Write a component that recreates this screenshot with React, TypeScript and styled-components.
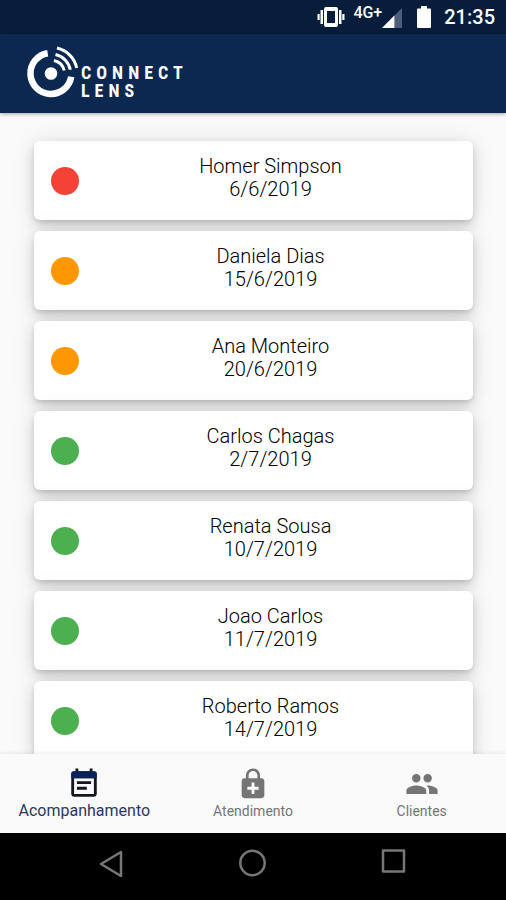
import React from "react";
import styled, { createGlobalStyle } from "styled-components";
import { MdEnhancedEncryption, MdPeople } from "react-icons/md";

const Global = createGlobalStyle`
  * { box-sizing: border-box; }
  html, body, #root { height: 100%; }
  body { margin: 0; background: #000; font-family: Roboto, "Liberation Sans", sans-serif; }
`;

const Screen = styled.div`
  display: flex;
  flex-direction: column;
  height: 100vh;
  overflow: hidden;
  background: #fafafa;
`;

const StatusBar = styled.div`
  display: flex;
  flex: none;
  align-items: center;
  justify-content: flex-end;
  height: 34px;
  padding-right: 11px;
  background: #071d3b;
  color: #fff;

  svg { flex: none; }
`;

const Signal = styled.div`
  display: flex;
  align-items: flex-end;
  height: 22px;
  margin: 0 15px 0 8px;
`;

const Network = styled.span`
  align-self: flex-start;
  font-size: 16px;
  line-height: 14px;
  font-weight: 500;
`;

const Clock = styled.time`
  margin-left: 13px;
  font-size: 20px;
  line-height: 24px;
  font-weight: 500;
`;

const AppBar = styled.header`
  position: relative;
  z-index: 1;
  display: flex;
  flex: none;
  align-items: center;
  height: 79px;
  padding: 0 0 4px 26px;
  background: #0a2850;
  box-shadow: 0 1px 4px rgba(0, 0, 0, 0.35);
`;

const Brand = styled.h1`
  align-self: flex-end;
  margin: 0 0 9px;
  color: #fff;
  font-family: "Roboto Condensed", "Open Sans Condensed", "Noto Sans Condensed", "Liberation Sans", sans-serif;
  font-size: 18px;
  line-height: 18px;
  font-weight: 700;
  letter-spacing: 5px;
`;

const BrandLine = styled.span`
  display: block;
`;

const List = styled.ul`
  display: flex;
  flex: 1;
  flex-direction: column;
  gap: 11px;
  min-height: 0;
  margin: 0;
  padding: 28px 33px 0 34px;
  overflow: hidden;
  list-style: none;
`;

const Card = styled.li`
  display: flex;
  flex: none;
  align-items: center;
  height: 79px;
  padding: 0 17px;
  border-radius: 6px;
  background: #fff;
  box-shadow: 0 3px 5px -1px rgba(0, 0, 0, 0.14), 0 6px 14px rgba(0, 0, 0, 0.12),
    0 1px 24px rgba(0, 0, 0, 0.1);
`;

const Dot = styled.span<{ $color: string }>`
  flex: none;
  width: 28px;
  height: 28px;
  border-radius: 50%;
  background: ${(p) => p.$color};
`;

const Details = styled.div`
  flex: 1;
  padding: 0 0 5px 6px;
  color: #000;
  font-size: 20px;
  line-height: 23px;
  font-weight: 300;
  text-align: center;
`;

const Name = styled.div``;
const Day = styled.time`
  display: block;
`;

const Tabs = styled.nav`
  position: relative;
  z-index: 1;
  display: flex;
  flex: none;
  height: 79px;
  background: #fafafa;
  box-shadow: 0 -1px 4px rgba(0, 0, 0, 0.08);
`;

const Tab = styled.button<{ $active?: boolean }>`
  display: flex;
  flex: 1 1 0;
  flex-direction: column;
  align-items: center;
  gap: 1px;
  min-width: 0;
  padding: 13px 0 0;
  border: 0;
  background: none;
  color: ${(p) => (p.$active ? "#2b3860" : "#757575")};
  font-family: inherit;
  font-size: ${(p) => (p.$active ? 16 : 14)}px;
  line-height: 18px;
  cursor: pointer;

  svg { display: block; flex: none; }
`;

const SystemBar = styled.div`
  display: flex;
  flex: none;
  align-items: center;
  justify-content: space-around;
  height: 67px;
  padding: 0 42px 7px;
  background: #000;
`;

const SystemButton = styled.button`
  padding: 0;
  border: 0;
  background: none;
  color: #777;

  svg { display: block; }
`;

const VibrateIcon = () => (
  <svg width="28" height="22" viewBox="0 0 28 22" fill="#fff" aria-hidden="true">
    <path fillRule="evenodd" d="M9 1h10a2 2 0 0 1 2 2v16a2 2 0 0 1-2 2H9a2 2 0 0 1-2-2V3a2 2 0 0 1 2-2zm1 4v12h8V5z" />
    <path d="M3.500 4H6v14H3.500zM0.500 8H2.700v6H0.500zM22 4h2.500v14H22zM25.300 8h2.200v6h-2.200z" />
  </svg>
);

const SignalIcon = () => (
  <svg width="20" height="20" viewBox="0 0 21 21" aria-hidden="true">
    <path d="M0 21 21 0v21z" fill="#4d5f78" />
    <path d="M0 21 13 8v13z" fill="#fff" />
  </svg>
);

const BatteryIcon = () => (
  <svg width="14" height="22" viewBox="0 0 14 22" fill="#fff" aria-hidden="true">
    <path d="M4 0h6v2.500h3a1 1 0 0 1 1 1V21a1 1 0 0 1-1 1H1a1 1 0 0 1-1-1V3.500a1 1 0 0 1 1-1h3z" />
  </svg>
);

const LensLogo = () => (
  <svg width="55" height="56" viewBox="26 44 55 56" fill="none" stroke="#fff" aria-hidden="true">
    <circle cx="51" cy="73.500" r="6.300" fill="#fff" stroke="none" />
    <path d="M47.700 53.200A20.500 20.500 0 1 0 71.200 76.700" strokeWidth="6.500" />
    <path d="M54 60.500A13.500 13.500 0 0 1 64.200 70.500" strokeWidth="3" />
    <path d="M55.500 54.500A19.500 19.500 0 0 1 70.300 69.800" strokeWidth="3" />
    <path d="M57 48A26 26 0 0 1 76.700 68" strokeWidth="3" />
  </svg>
);

const CalendarIcon = () => (
  <svg width="34" height="34" viewBox="0 0 24 24" aria-hidden="true">
    <path fill="#15171f" d="M17 10H7v2h10v-2zm2-7h-1V1h-2v2H8V1H6v2H5c-1.110 0-1.990.9-1.990 2L3 19c0 1.100.89 2 2 2h14c1.100 0 2-.9 2-2V5c0-1.100-.9-2-2-2zm0 16H5V8h14v11zm-5-5H7v2h7v-2z" />
    <path fill="#0b2255" d="M5 3h14a2 2 0 0 1 2 2v3H3V5a2 2 0 0 1 2-2z" />
  </svg>
);

const RED = "#f44336";
const ORANGE = "#ff9800";
const GREEN = "#4caf50";

const visits = [
  { name: "Homer Simpson", date: "6/6/2019", color: RED },
  { name: "Daniela Dias", date: "15/6/2019", color: ORANGE },
  { name: "Ana Monteiro", date: "20/6/2019", color: ORANGE },
  { name: "Carlos Chagas", date: "2/7/2019", color: GREEN },
  { name: "Renata Sousa", date: "10/7/2019", color: GREEN },
  { name: "Joao Carlos", date: "11/7/2019", color: GREEN },
  { name: "Roberto Ramos", date: "14/7/2019", color: GREEN },
];

export default function App() {
  return (
    <Screen>
      <Global />
      <StatusBar>
        <VibrateIcon />
        <Signal>
          <Network>4G+</Network>
          <SignalIcon />
        </Signal>
        <BatteryIcon />
        <Clock>21:35</Clock>
      </StatusBar>
      <AppBar>
        <LensLogo />
        <Brand>
          <BrandLine>CONNECT</BrandLine>
          <BrandLine>LENS</BrandLine>
        </Brand>
      </AppBar>
      <List>
        {visits.map((v) => (
          <Card key={v.name}>
            <Dot $color={v.color} />
            <Details>
              <Name>{v.name}</Name>
              <Day>{v.date}</Day>
            </Details>
          </Card>
        ))}
      </List>
      <Tabs>
        <Tab $active aria-current="page">
          <CalendarIcon />
          Acompanhamento
        </Tab>
        <Tab>
          <MdEnhancedEncryption size={34} />
          Atendimento
        </Tab>
        <Tab>
          <MdPeople size={34} />
          Clientes
        </Tab>
      </Tabs>
      <SystemBar>
        <SystemButton aria-label="Voltar">
          <svg width="28" height="28" viewBox="0 0 28 28" fill="none" stroke="currentColor" strokeWidth="2.500" strokeLinejoin="round">
            <path d="M3 15 23 3v24z" />
          </svg>
        </SystemButton>
        <SystemButton aria-label="Início">
          <svg width="28" height="28" viewBox="0 0 28 28" fill="none" stroke="currentColor" strokeWidth="2.500">
            <circle cx="13.500" cy="14" r="12.200" />
          </svg>
        </SystemButton>
        <SystemButton aria-label="Recentes">
          <svg width="28" height="28" viewBox="0 0 28 28" fill="none" stroke="currentColor" strokeWidth="2.500" strokeLinejoin="round">
            <path d="M3 1.500h21v21H3z" />
          </svg>
        </SystemButton>
      </SystemBar>
    </Screen>
  );
}
